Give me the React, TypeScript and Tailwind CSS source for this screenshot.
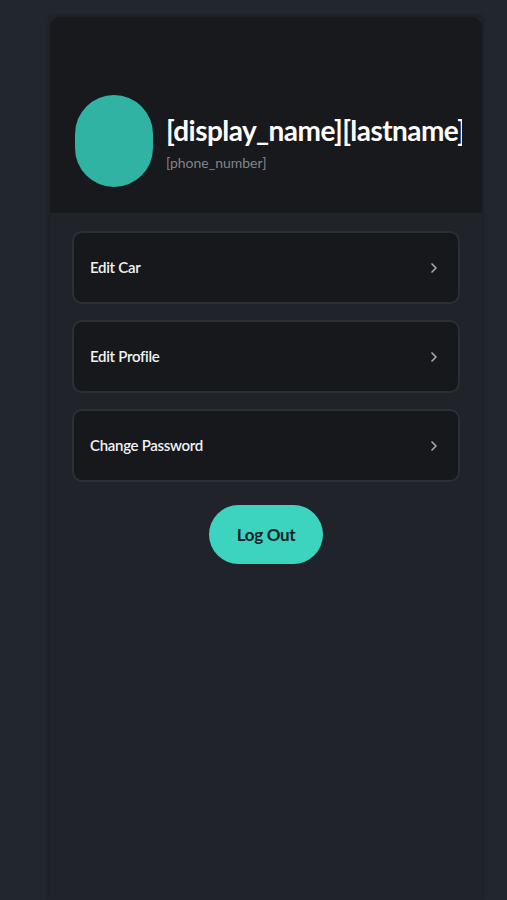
import { ChevronRight } from "lucide-react";

const MENU = ["Edit Car", "Edit Profile", "Change Password"];

function MenuItem({ label }: { label: string }) {
  return (
    <button
      type="button"
      className="
        flex h-[73px] w-full items-center justify-between
        rounded-[10px] border-2 border-[#2b3035] bg-[#16181b]
        pl-[16px] pr-[16px]
        text-left text-[15px] font-semibold tracking-[-0.02em] text-[#f1f2f3]
      "
    >
      <span>{label}</span>
      <ChevronRight className="h-4 w-4 text-[#a3a8ad]" strokeWidth={2.5} />
    </button>
  );
}

export default function App() {
  return (
    <div
      className="flex min-h-screen w-full bg-[#22262d]"
      style={{ fontFamily: "Lato, 'Noto Sans', sans-serif" }}
    >
      <div className="ml-[50px] mt-[17px] flex w-[432px] flex-col bg-[#20242a] shadow-[0_0_4px_rgba(0,0,0,0.35)]">
        <header className="flex h-[196px] shrink-0 items-start gap-[13px] overflow-hidden rounded-t-[10px] bg-[#17191c] pl-[25px] pr-[20px] pt-[78px]">
          <div className="h-[92px] w-[78px] shrink-0 rounded-full bg-[#30b3a3]" />
          <div className="min-w-0 overflow-hidden pt-[18px]">
            <h1 className="whitespace-nowrap text-[28px] font-bold leading-[34px] tracking-[-0.02em] text-white">
              [display_name][lastname]
            </h1>
            <p className="mt-[7px] text-[14px] leading-[18px] text-[#7f858c]">
              [phone_number]
            </p>
          </div>
        </header>

        <div className="flex flex-col gap-[16px] px-[22px] pt-[18px]">
          {MENU.map((m) => (
            <MenuItem key={m} label={m} />
          ))}
        </div>

        <div className="flex justify-center pt-[23px]">
          <button
            type="button"
            className="h-[59px] w-[114px] rounded-full bg-[#3cd3bf] text-[17px] font-bold tracking-[-0.02em] text-[#13232a]"
          >
            Log Out
          </button>
        </div>
      </div>
    </div>
  );
}
